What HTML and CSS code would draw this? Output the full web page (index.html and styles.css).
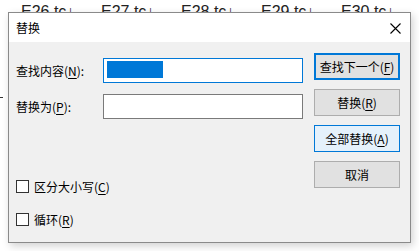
FILE: index.html
```html
<!DOCTYPE html>
<html lang="zh-CN">
<head>
<meta charset="utf-8">
<title>替换</title>
<link rel="stylesheet" href="styles.css">
</head>
<body>
<div class="sheet">
  <span class="cell">E26 tc↓</span>
  <span class="cell">E27 tc↓</span>
  <span class="cell">E28 tc↓</span>
  <span class="cell">E29 tc↓</span>
  <span class="cell">E30 tc↓</span>
</div>
<div class="tick"></div>
<div class="dialog">
  <div class="titlebar">
    <span class="title">替换</span>
    <span class="close">
      <svg width="11" height="11" viewBox="0 0 11 11"><path d="M0.5 0.5 L10.5 10.5 M10.5 0.5 L0.5 10.5" stroke="#000" stroke-width="1.1" fill="none"/></svg>
    </span>
  </div>
  <div class="body">
    <div class="left">
      <div class="row">
        <label class="label">查找内容(<u>N</u>):</label>
        <div class="input focused"><span class="sel"></span></div>
      </div>
      <div class="row">
        <label class="label">替换为(<u>P</u>):</label>
        <div class="input"></div>
      </div>
      <div class="checks">
        <div class="check"><span class="box"></span><span>区分大小写(<u>C</u>)</span></div>
        <div class="check"><span class="box"></span><span>循环(<u>R</u>)</span></div>
      </div>
    </div>
    <div class="buttons">
      <div class="btn default">查找下一个(<u>F</u>)</div>
      <div class="btn">替换(<u>R</u>)</div>
      <div class="btn hover">全部替换(<u>A</u>)</div>
      <div class="btn">取消</div>
    </div>
  </div>
</div>
</body>
</html>
```
FILE: styles.css
```css
html, body {
  margin: 0;
  padding: 0;
  background: #ffffff;
  width: 419px;
  height: 251px;
  overflow: hidden;
  font-family: "Noto Sans CJK SC", "Noto Sans", sans-serif;
  color: #000;
}
.sheet {
  display: flex;
  gap: 0;
  padding-left: 21px;
  margin-top: 3px;
  font-family: "Liberation Sans", sans-serif;
  font-size: 16px;
  line-height: 18px;
  color: #222;
}
.cell {
  width: 80px;
  flex: none;
}
.tick {
  position: absolute;
  left: 0;
  top: 97px;
  width: 3px;
  height: 1px;
  background: #333;
}
.dialog {
  position: absolute;
  left: 8px;
  top: 12px;
  width: 403px;
  height: 231px;
  box-sizing: border-box;
  border: 1px solid #8a8a8a;
  background: #f0f0f0;
  box-shadow: 2px 3px 8px rgba(0,0,0,0.18);
  display: flex;
  flex-direction: column;
}
.titlebar {
  height: 29px;
  background: #fff;
  display: flex;
  align-items: center;
  justify-content: space-between;
  padding-left: 7px;
  padding-right: 9px;
  font-size: 12px;
  flex: none;
}
.title {
  line-height: 16px;
  margin-top: 0px;
}
.close {
  display: flex;
  width: 11px;
  height: 11px;
  margin-top: 1px;
}
.body {
  flex: 1;
  display: flex;
  padding: 11px 10px 0 7px;
  font-size: 12px;
}
.left {
  width: 287px;
  flex: none;
  padding-top: 5px;
  display: flex;
  flex-direction: column;
}
.row {
  display: flex;
  align-items: center;
  height: 25px;
  margin-bottom: 11px;
}
.label {
  width: 87px;
  flex: none;
  line-height: 16px;
}
u {
  text-decoration: underline;
  text-underline-offset: 2px;
}
.input {
  width: 200px;
  height: 25px;
  box-sizing: border-box;
  border: 1px solid #7a7a7a;
  background: #fff;
  padding: 2px 3px;
}
.input.focused {
  border-color: #0078d7;
}
.sel {
  display: block;
  width: 56px;
  height: 17px;
  background: #0078d7;
}
.checks {
  display: flex;
  flex-direction: column;
  gap: 18px;
  margin-top: 49px;
  padding-left: 0;
}
.check {
  display: flex;
  align-items: center;
  gap: 5px;
  height: 15px;
  line-height: 15px;
}
.box {
  width: 13px;
  height: 13px;
  box-sizing: border-box;
  border: 1px solid #333;
  background: #fff;
  flex: none;
}
.buttons {
  margin-left: 11px;
  width: 86px;
  display: flex;
  flex-direction: column;
  gap: 9px;
}
.btn {
  height: 27px;
  box-sizing: border-box;
  border: 1px solid #adadad;
  background: #e1e1e1;
  display: flex;
  align-items: center;
  justify-content: center;
  line-height: 16px;
}
.btn.default {
  border: 2px solid #0078d7;
}
.btn.hover {
  border-color: #0078d7;
  background: #e5f1fb;
}
```
